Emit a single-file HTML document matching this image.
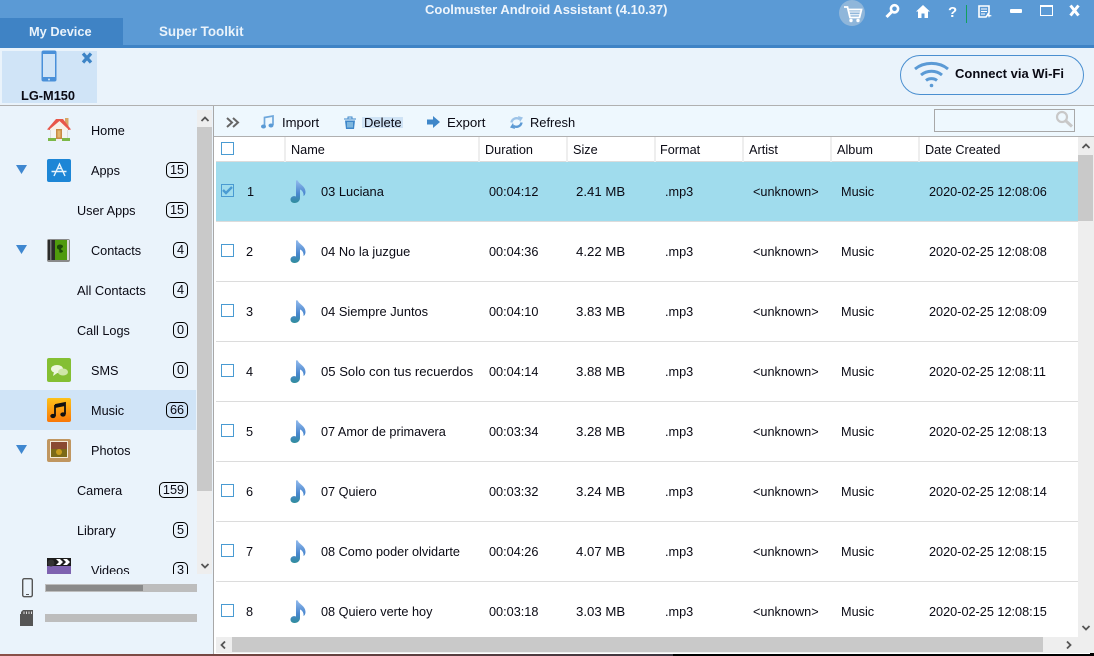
<!DOCTYPE html>
<html><head><meta charset="utf-8"><style>
*{box-sizing:border-box}
html,body{margin:0;padding:0}
body{width:1094px;height:656px;overflow:hidden;position:relative;background:#eaf3fb;font-family:"Liberation Sans",sans-serif;font-size:12.7px;color:#0a0a14}
.a{position:absolute}
.t{position:absolute;white-space:nowrap;line-height:16px;margin-top:1px}
.n{font-size:12.85px}
.s{font-size:13.2px}
.b{position:absolute;height:16px;right:906px;border:1px solid #000;border-radius:5px;line-height:14px;text-align:center;font-size:12.7px;background:#eaf3fb}
.sep{position:absolute;left:216px;width:862px;height:1px;background:#dcdcdc}
.hs{position:absolute;top:137px;width:2px;height:25px;background:#eeeeee}
.cb{position:absolute;left:221px;width:13px;height:13px;border:1.5px solid #4a9bd2;background:#fff}
svg{position:absolute;overflow:visible}
</style></head><body>
<svg width="0" height="0" style="position:absolute"><defs>
<linearGradient id="ng" x1="0" y1="0" x2="0" y2="1"><stop offset="0" stop-color="#92baec"/><stop offset=".6" stop-color="#4a86cf"/><stop offset="1" stop-color="#2f8d9c"/></linearGradient>
<symbol id="note" viewBox="0 0 16 23"><path d="M6 16.5V1C6 0 7.5 0 8 1 9 4 15.5 6 15.5 12 15.5 14 14.5 15.5 13.5 16 14 12 11.5 10 10 9.5V18C10 21 7.5 23 4.5 23 2 23 .5 21.5 .5 19.5 .5 17 3.5 15.5 6 16.5Z" fill="url(#ng)"/></symbol>
</defs></svg>

<!-- Title bar -->
<div class="a" style="left:0;top:0;width:1094px;height:45px;background:#5b9ad5"></div>
<div class="a" style="left:0;top:45px;width:1094px;height:3px;background:#3f83c5"></div>
<div class="a" style="left:0;top:18px;width:123px;height:30px;background:#3f83c5"></div>
<div class="t" style="left:29px;top:23px;font-weight:bold;color:#eaf3fb;font-size:12.8px">My Device</div>
<div class="t" style="left:159px;top:23px;font-weight:bold;color:#eaf3fb;font-size:13.4px">Super Toolkit</div>
<div class="t" style="left:425px;top:1px;font-weight:bold;color:#eef5fc;font-size:13px">Coolmuster Android Assistant (4.10.37)</div>

<!-- top icons -->
<svg style="left:839px;top:0" width="26" height="26"><circle cx="13" cy="13" r="13" fill="#8fb6da"/><path d="M5 7H8.5L11 17.5H20.5L22.5 9.5H9" fill="none" stroke="#fff" stroke-width="1.8"/><path d="M10 12H21.5M10.5 14.8H21" stroke="#fff"/><circle cx="12" cy="20.5" r="1.7" fill="#fff"/><circle cx="19" cy="20.5" r="1.7" fill="#fff"/></svg>
<svg style="left:885px;top:4px" width="15" height="14"><circle cx="9.5" cy="4.8" r="3.6" fill="none" stroke="#fff" stroke-width="2.6"/><path d="M7 7.5L1.5 13" stroke="#fff" stroke-width="3"/></svg>
<svg style="left:916px;top:5px" width="14" height="13"><path d="M7 0L14 6.5H12V13H8.5V8.5H5.5V13H2V6.5H0Z" fill="#fff"/></svg>
<div class="t" style="left:948px;top:4px;font-weight:bold;color:#fff;font-size:15px">?</div>
<div class="a" style="left:966px;top:5px;width:1px;height:18px;background:#12a05c"></div>
<svg style="left:978px;top:5px" width="15" height="13"><path d="M1 1H11V8L8 12H1Z" fill="none" stroke="#fff" stroke-width="1.6"/><path d="M3 4H9M3 6.5H9M3 9H7" stroke="#fff"/><path d="M9 8L14 11L11.5 11.5 11 13Z" fill="#fff"/></svg>
<div class="a" style="left:1010px;top:9px;width:12px;height:4px;background:#fff;border-radius:1px"></div>
<div class="a" style="left:1040px;top:5px;width:13px;height:11px;border:1px solid #fff;border-top:2px solid #fff"></div>
<svg style="left:1069px;top:5px" width="11" height="11"><path d="M1.5 0.5L9.5 10.5M9.5 0.5L1.5 10.5" stroke="#fff" stroke-width="3"/></svg>

<!-- Device strip -->
<div class="a" style="left:2px;top:51px;width:95px;height:52px;background:#d0e4f7"></div>
<svg style="left:41px;top:50px" width="16" height="32"><rect x=".5" y=".5" width="15" height="31" rx="2" fill="#4a90d9"/><rect x="2" y="4" width="12" height="23" fill="#d0e4f7"/><circle cx="8" cy="29.5" r="1" fill="#d0e4f7"/></svg>
<svg style="left:82px;top:53px" width="10" height="10"><path d="M1 0.5L9 9.5M9 0.5L1 9.5" stroke="#3d84c6" stroke-width="3.2"/></svg>
<div class="t" style="left:21px;top:87px;font-weight:bold;font-size:12.8px">LG-M150</div>
<div class="a" style="left:900px;top:55px;width:184px;height:40px;border:1px solid #4a8fd0;border-radius:20px"></div>
<svg style="left:914px;top:61px" width="35" height="27" fill="none" stroke="#5b9ad5" stroke-width="3"><path d="M1 8C10 0.5 25 0.5 34 8"/><path d="M7 14C13 9 22 9 28 14"/><path d="M12 19.5C15 17 20 17 23 19.5"/><circle cx="17.5" cy="24.5" r="1.8" fill="#5b9ad5" stroke="none"/></svg>
<div class="t" style="left:955px;top:65px;font-weight:bold;font-size:13px">Connect via Wi-Fi</div>
<div class="a" style="left:0;top:105px;width:1094px;height:1px;background:#b0b0b0"></div>

<!-- Sidebar -->
<div class="a" style="left:0;top:390px;width:196px;height:40px;background:#d0e4f7"></div>

<svg style="left:47px;top:118px" width="24" height="24"><rect x="18" y="0" width="3.5" height="8" fill="#d8a868"/><path d="M3 10H21V21H3Z" fill="#dedede"/><path d="M4 10H9V21H4ZM15 10H20V21H15Z" fill="#f4f4f4"/><path d="M0 11.5L9 1H16L24 11.5 21 12 12.5 4 3 12Z" fill="#e8574a"/><path d="M3 11L12.5 3 21 11V12H3Z" fill="#f7f2e8"/><rect x="9" y="11" width="6" height="10" fill="#c98a45"/><rect x="10.5" y="12.5" width="3" height="7" fill="#e4b56d"/><rect x="1" y="20" width="8" height="3" fill="#7cb848"/><rect x="15" y="20" width="8" height="3" fill="#7cb848"/><rect x="9" y="21" width="6" height="2" fill="#eee"/></svg>
<div class="t" style="left:91px;top:122px">Home</div>

<svg style="left:16px;top:165px" width="12" height="10"><path d="M0 0H11L5.5 9Z" fill="#3f87d0"/></svg>
<svg style="left:47px;top:159px" width="24" height="23"><rect width="24" height="23" rx="2" fill="#1d86d6"/><path d="M7 17L12.5 5 18 17M4.5 12.5H19.5M10 9.5L15 9.5" fill="none" stroke="#e8f4fc" stroke-width="1.4"/></svg>
<div class="t" style="left:91px;top:162px">Apps</div><div class="b" style="top:162px;width:22px">15</div>

<div class="t" style="left:77px;top:202px">User Apps</div><div class="b" style="top:202px;width:22px">15</div>

<svg style="left:16px;top:245px" width="12" height="10"><path d="M0 0H11L5.5 9Z" fill="#3f87d0"/></svg>
<svg style="left:47px;top:239px" width="23" height="23"><rect width="23" height="23" rx="2" fill="#8a8a8a"/><rect x="1" y="1" width="7" height="20" fill="#2b2b2b"/><rect x="3" y="1" width="1.5" height="20" fill="#777"/><rect x="8" y="1" width="12" height="20" fill="#4f9a0d"/><rect x="20" y="1" width="2" height="20" fill="#d8d8d8"/><path d="M10 7C11 5 15 5 16 7 16 9 14 9 14 10 14 11 16 11 16 12.500 15 14 13 14 12 13 13 12 12 10 10 9.500Z" fill="#1c4a06"/></svg>
<div class="t" style="left:91px;top:242px">Contacts</div><div class="b" style="top:242px;width:15px">4</div>

<div class="t" style="left:77px;top:282px;font-size:12.9px">All Contacts</div><div class="b" style="top:282px;width:15px">4</div>
<div class="t" style="left:77px;top:322px">Call Logs</div><div class="b" style="top:322px;width:15px">0</div>

<svg style="left:47px;top:358px" width="24" height="24"><rect width="24" height="24" rx="2" fill="#84bf33"/><ellipse cx="10" cy="11" rx="6" ry="4" fill="#edf6dd"/><ellipse cx="16" cy="14" rx="5" ry="3.5" fill="#cfe6a8"/><path d="M7 14L6 18 11 14.5Z" fill="#edf6dd"/></svg>
<div class="t" style="left:91px;top:362px">SMS</div><div class="b" style="top:362px;width:15px">0</div>

<svg style="left:47px;top:398px" width="24" height="24"><defs><linearGradient id="mg" x1="0" y1="0" x2="0" y2="1"><stop offset="0" stop-color="#fdc21a"/><stop offset="1" stop-color="#f97708"/></linearGradient></defs><rect width="24" height="24" rx="2" fill="url(#mg)"/><path d="M8 7L18 5V16M8 7V18" fill="none" stroke="#111" stroke-width="1.8"/><path d="M8 7L18 5V8L8 10Z" fill="#111"/><ellipse cx="6" cy="18" rx="2.7" ry="2.1" fill="#111"/><ellipse cx="16" cy="16.5" rx="2.7" ry="2.1" fill="#111"/></svg>
<div class="t" style="left:91px;top:402px">Music</div><div class="b" style="top:402px;width:22px;background:#d0e4f7">66</div>

<svg style="left:16px;top:445px" width="12" height="10"><path d="M0 0H11L5.5 9Z" fill="#3f87d0"/></svg>
<svg style="left:47px;top:439px" width="24" height="23"><rect width="24" height="23" rx="2" fill="#c09660"/><rect x="3" y="2" width="18" height="17" fill="#f3ead8"/><rect x="4" y="3" width="16" height="7" fill="#8a4a32"/><rect x="4" y="10" width="16" height="8" fill="#7b6a18"/><circle cx="12" cy="13" r="3" fill="#c89c1c"/></svg>
<div class="t" style="left:91px;top:442px">Photos</div>

<div class="t" style="left:77px;top:482px">Camera</div><div class="b" style="top:482px;width:29px">159</div>
<div class="t" style="left:77px;top:522px">Library</div><div class="b" style="top:522px;width:15px">5</div>

<div class="a" style="left:0;top:555px;width:196px;height:19px;overflow:hidden">
<svg style="left:47px;top:3px" width="24" height="24"><rect y="5" width="24" height="19" fill="#7e62b0"/><rect width="24" height="8" fill="#1c1c1c"/><circle cx="4" cy="5" r="3.5" fill="#333"/><path d="M9 1L12 4 9 7H13L16 4 13 1ZM16 1L19 4 16 7H20L23 4 20 1Z" fill="#fff"/></svg>
<div class="t" style="left:91px;top:7px">Videos</div><div class="b" style="top:7px;left:173px;right:auto;width:15px">3</div>
</div>

<!-- sidebar scrollbar -->
<div class="a" style="left:197px;top:110px;width:15px;height:464px;background:#eeeeee"></div>
<div class="a" style="left:197px;top:127px;width:15px;height:364px;background:#c9c9c9"></div>
<svg style="left:201px;top:116px" width="8" height="6"><path d="M0.5 5L4 1.5 7.500 5" fill="none" stroke="#555" stroke-width="1.8"/></svg>
<svg style="left:201px;top:563px" width="8" height="6"><path d="M0.5 1L4 4.5 7.500 1" fill="none" stroke="#555" stroke-width="1.8"/></svg>
<div class="a" style="left:213px;top:106px;width:1px;height:548px;background:#a8a8a8"></div>

<!-- storage -->
<svg style="left:22px;top:578px" width="11" height="20"><rect x=".7" y=".7" width="9.6" height="18" rx="1.6" fill="none" stroke="#555" stroke-width="1.4"/><rect x="4" y="16" width="3" height="1" fill="#555"/></svg>
<div class="a" style="left:45px;top:584px;width:152px;height:8px;background:#bdbdbd"></div>
<div class="a" style="left:46px;top:585px;width:97px;height:6px;background:#8a8a8a"></div>
<svg style="left:20px;top:610px" width="13" height="16"><path d="M3 0H13V16H0V4L1 4V2Z" fill="#555"/><path d="M4 1.5V4M6.500 1.5V4M9 1.5V4M11.500 1.5V4" stroke="#ddd"/></svg>
<div class="a" style="left:45px;top:614px;width:152px;height:8px;background:#bdbdbd"></div>

<!-- Toolbar -->
<div class="a" style="left:214px;top:106px;width:880px;height:30px;background:#eef8fe"></div>
<div class="a" style="left:214px;top:136px;width:880px;height:1px;background:#b0b0b0"></div>
<svg style="left:226px;top:117px" width="14" height="11" fill="none" stroke="#666" stroke-width="2"><path d="M1 1L6 5.5 1 10M7 1L12 5.5 7 10"/></svg>
<svg style="left:261px;top:115px" width="13" height="14"><path d="M3.500 11V2.500L12 1V10" fill="none" stroke="#6fa8dc" stroke-width="1.7"/><ellipse cx="2.500" cy="11.500" rx="2.500" ry="2" fill="#5a9ad5"/><ellipse cx="10" cy="10.500" rx="2.500" ry="2" fill="#5a9ad5"/></svg>
<div class="t" style="left:282px;top:114px;font-size:13.1px">Import</div>
<svg style="left:344px;top:116px" width="12" height="13"><path d="M0 3H12M4 3V1H8V3" stroke="#3f87c9" fill="none"/><path d="M1 4.500H11L10 13H2Z" fill="#3f87c9"/><path d="M4 6V11.500M6 6V11.500M8 6V11.500" stroke="#dff" stroke-width=".8"/></svg>
<div class="a" style="left:362px;top:117px;width:41px;height:11px;background:#cfe3f5"></div>
<div class="t" style="left:364px;top:114px;font-size:13px">Delete</div>
<svg style="left:427px;top:116px" width="13" height="12"><path d="M0 3.500H6V0L13 6 6 12V8.500H0Z" fill="#3f87c9"/></svg>
<div class="t" style="left:447px;top:114px;font-size:13.3px">Export</div>
<svg style="left:510px;top:116px" width="13" height="13" fill="none" stroke-width="2.4"><path d="M1.500 6.500C2 3 6 1 9.500 3" stroke="#9cc3e8"/><path d="M8 0L13 1.500 10 6Z" fill="#9cc3e8"/><path d="M11.500 6.500C11 10 7 12 3.500 10" stroke="#5c9ad4"/><path d="M5 13L0 11.500 3 7Z" fill="#5c9ad4"/></svg>
<div class="t" style="left:530px;top:114px;font-size:12.9px">Refresh</div>
<div class="a" style="left:934px;top:109px;width:141px;height:23px;border:1px solid #a8a8a8"></div>
<svg style="left:1055px;top:110px" width="19" height="18"><circle cx="7" cy="7" r="5" fill="none" stroke="#c8c8c8" stroke-width="2.2"/><path d="M11 11L17 16.500" stroke="#c8c8c8" stroke-width="3"/></svg>

<!-- Table -->
<div class="a" style="left:214px;top:137px;width:880px;height:517px;background:#fff"></div>
<div class="a" style="left:216px;top:161px;width:862px;height:1px;background:#dcdcdc"></div>
<div class="a" style="left:216px;top:162px;width:862px;height:59px;background:#a0dced"></div>
<div class="hs" style="left:284px"></div><div class="hs" style="left:478px"></div><div class="hs" style="left:566px"></div><div class="hs" style="left:654px"></div><div class="hs" style="left:742px"></div><div class="hs" style="left:830px"></div><div class="hs" style="left:918px"></div>
<div class="cb" style="top:142px"></div>
<div class="t" style="left:291px;top:141px">Name</div>
<div class="t" style="left:485px;top:141px">Duration</div>
<div class="t" style="left:573px;top:141px">Size</div>
<div class="t" style="left:660px;top:141px">Format</div>
<div class="t" style="left:749px;top:141px">Artist</div>
<div class="t" style="left:837px;top:141px">Album</div>
<div class="t" style="left:925px;top:141px">Date Created</div>

<div class="sep" style="top:221px"></div><div class="sep" style="top:281px"></div><div class="sep" style="top:341px"></div><div class="sep" style="top:401px"></div><div class="sep" style="top:461px"></div><div class="sep" style="top:521px"></div><div class="sep" style="top:581px"></div>

<!-- row 1 -->
<div class="cb" style="top:184px;background:#a0dced"></div>
<svg style="left:222px;top:186px" width="11" height="9"><path d="M1 4L4 7 10 1" fill="none" stroke="#4a9bd2" stroke-width="2.400"/></svg>
<div class="t" style="left:247px;top:183px">1</div><svg style="left:290px;top:180px" width="16" height="23"><use href="#note"/></svg>
<div class="t n" style="left:321px;top:183px">03 Luciana</div><div class="t" style="left:489px;top:183px">00:04:12</div><div class="t s" style="left:576px;top:183px">2.41 MB</div><div class="t" style="left:665px;top:183px">.mp3</div><div class="t" style="left:753px;top:183px">&lt;unknown&gt;</div><div class="t" style="left:841px;top:183px">Music</div><div class="t" style="left:929px;top:183px">2020-02-25 12:08:06</div>
<!-- row 2 -->
<div class="cb" style="top:244px"></div>
<div class="t" style="left:246px;top:243px">2</div><svg style="left:290px;top:240px" width="16" height="23"><use href="#note"/></svg>
<div class="t n" style="left:321px;top:243px">04 No la juzgue</div><div class="t" style="left:489px;top:243px">00:04:36</div><div class="t s" style="left:576px;top:243px">4.22 MB</div><div class="t" style="left:665px;top:243px">.mp3</div><div class="t" style="left:753px;top:243px">&lt;unknown&gt;</div><div class="t" style="left:841px;top:243px">Music</div><div class="t" style="left:929px;top:243px">2020-02-25 12:08:08</div>
<!-- row 3 -->
<div class="cb" style="top:304px"></div>
<div class="t" style="left:246px;top:303px">3</div><svg style="left:290px;top:300px" width="16" height="23"><use href="#note"/></svg>
<div class="t n" style="left:321px;top:303px">04 Siempre Juntos</div><div class="t" style="left:489px;top:303px">00:04:10</div><div class="t s" style="left:576px;top:303px">3.83 MB</div><div class="t" style="left:665px;top:303px">.mp3</div><div class="t" style="left:753px;top:303px">&lt;unknown&gt;</div><div class="t" style="left:841px;top:303px">Music</div><div class="t" style="left:929px;top:303px">2020-02-25 12:08:09</div>
<!-- row 4 -->
<div class="cb" style="top:364px"></div>
<div class="t" style="left:246px;top:363px">4</div><svg style="left:290px;top:360px" width="16" height="23"><use href="#note"/></svg>
<div class="t" style="left:321px;top:363px;font-size:13.1px">05 Solo con tus recuerdos</div><div class="t" style="left:489px;top:363px">00:04:14</div><div class="t s" style="left:576px;top:363px">3.88 MB</div><div class="t" style="left:665px;top:363px">.mp3</div><div class="t" style="left:753px;top:363px">&lt;unknown&gt;</div><div class="t" style="left:841px;top:363px">Music</div><div class="t" style="left:929px;top:363px">2020-02-25 12:08:11</div>
<!-- row 5 -->
<div class="cb" style="top:424px"></div>
<div class="t" style="left:246px;top:423px">5</div><svg style="left:290px;top:420px" width="16" height="23"><use href="#note"/></svg>
<div class="t" style="left:321px;top:423px">07 Amor de primavera</div><div class="t" style="left:489px;top:423px">00:03:34</div><div class="t s" style="left:576px;top:423px">3.28 MB</div><div class="t" style="left:665px;top:423px">.mp3</div><div class="t" style="left:753px;top:423px">&lt;unknown&gt;</div><div class="t" style="left:841px;top:423px">Music</div><div class="t" style="left:929px;top:423px">2020-02-25 12:08:13</div>
<!-- row 6 -->
<div class="cb" style="top:484px"></div>
<div class="t" style="left:246px;top:483px">6</div><svg style="left:290px;top:480px" width="16" height="23"><use href="#note"/></svg>
<div class="t" style="left:321px;top:483px">07 Quiero</div><div class="t" style="left:489px;top:483px">00:03:32</div><div class="t s" style="left:576px;top:483px">3.24 MB</div><div class="t" style="left:665px;top:483px">.mp3</div><div class="t" style="left:753px;top:483px">&lt;unknown&gt;</div><div class="t" style="left:841px;top:483px">Music</div><div class="t" style="left:929px;top:483px">2020-02-25 12:08:14</div>
<!-- row 7 -->
<div class="cb" style="top:544px"></div>
<div class="t" style="left:246px;top:543px">7</div><svg style="left:290px;top:540px" width="16" height="23"><use href="#note"/></svg>
<div class="t" style="left:321px;top:543px">08 Como poder olvidarte</div><div class="t" style="left:489px;top:543px">00:04:26</div><div class="t s" style="left:576px;top:543px">4.07 MB</div><div class="t" style="left:665px;top:543px">.mp3</div><div class="t" style="left:753px;top:543px">&lt;unknown&gt;</div><div class="t" style="left:841px;top:543px">Music</div><div class="t" style="left:929px;top:543px">2020-02-25 12:08:15</div>
<!-- row 8 -->
<div class="cb" style="top:604px"></div>
<div class="t" style="left:246px;top:603px">8</div><svg style="left:290px;top:600px" width="16" height="23"><use href="#note"/></svg>
<div class="t" style="left:321px;top:603px">08 Quiero verte hoy</div><div class="t" style="left:489px;top:603px">00:03:18</div><div class="t s" style="left:576px;top:603px">3.03 MB</div><div class="t" style="left:665px;top:603px">.mp3</div><div class="t" style="left:753px;top:603px">&lt;unknown&gt;</div><div class="t" style="left:841px;top:603px">Music</div><div class="t" style="left:929px;top:603px">2020-02-25 12:08:15</div>

<!-- Table scrollbars -->
<div class="a" style="left:1078px;top:137px;width:16px;height:516px;background:#eeeeee"></div>
<div class="a" style="left:1078px;top:155px;width:15px;height:66px;background:#c9c9c9"></div>
<svg style="left:1082px;top:143px" width="8" height="6"><path d="M0.5 5L4 1.5 7.500 5" fill="none" stroke="#555" stroke-width="1.8"/></svg>
<svg style="left:1082px;top:625px" width="8" height="6"><path d="M0.5 1L4 4.5 7.500 1" fill="none" stroke="#555" stroke-width="1.8"/></svg>
<div class="a" style="left:216px;top:637px;width:862px;height:16px;background:#eeeeee"></div>
<div class="a" style="left:232px;top:637px;width:811px;height:15px;background:#c9c9c9"></div>
<svg style="left:220px;top:641px" width="6" height="8"><path d="M5 0.5L1.5 4 5 7.500" fill="none" stroke="#555" stroke-width="1.8"/></svg>
<svg style="left:1066px;top:641px" width="6" height="8"><path d="M1 0.5L4.5 4 1 7.500" fill="none" stroke="#555" stroke-width="1.8"/></svg>

<!-- bottom edge -->
<div class="a" style="left:0;top:654px;width:673px;height:2px;background:linear-gradient(90deg,#8a5048,#6e4440 40%,#3c3640)"></div>
<div class="a" style="left:673px;top:654px;width:421px;height:2px;background:#000"></div>
<div class="a" style="left:1090px;top:653px;width:4px;height:1px;background:#000"></div>
</body></html>
